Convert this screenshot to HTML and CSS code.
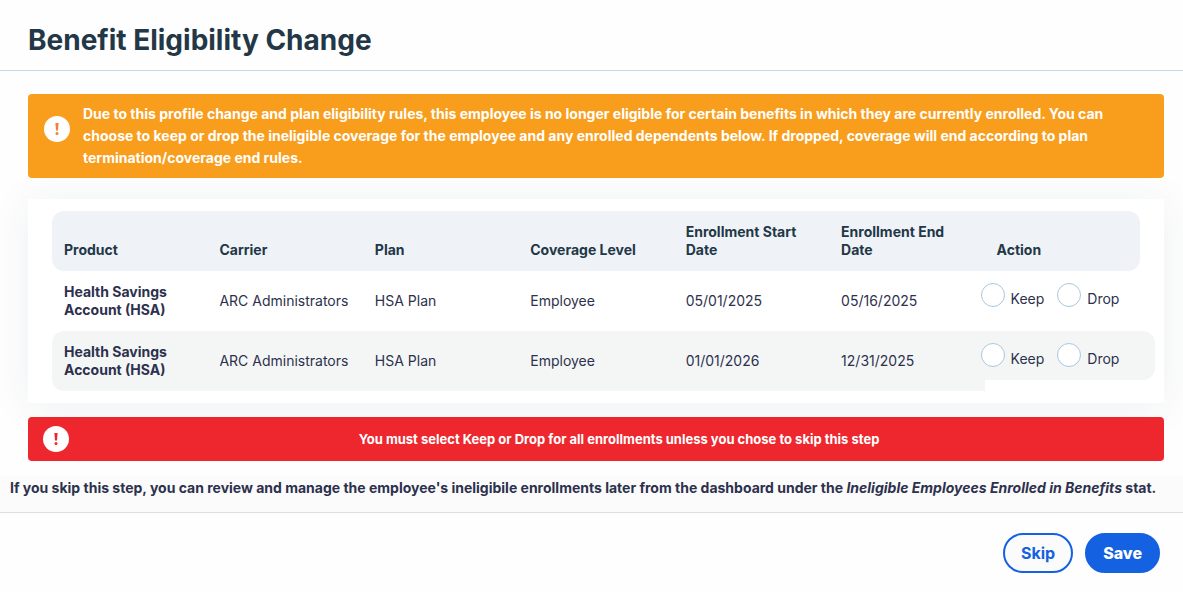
FILE: index.html
```html
<!DOCTYPE html>
<html lang="en">
<head>
    <meta charset="UTF-8">
    <meta content="width=device-width, initial-scale=1.0" name="viewport">
    <title>Benefit Eligibility Change</title>
    <link rel="stylesheet" href="styles.css">
</head>
<body>
<header>
    <h1>Benefit Eligibility Change</h1>
</header>
<form id="eligibility-form">
    <main>
        <div class="alert alert-warning">
            <svg class="alert-icon" viewBox="0 0 26 26" aria-hidden="true">
                <circle cx="13" cy="13" r="13" fill="#fff"/>
                <path d="M11.4 7h3.2l-.6 7.6h-2z" fill="currentColor"/>
                <circle cx="13" cy="17.5" r="1.5" fill="currentColor"/>
            </svg>
            <p>Due to this profile change and plan eligibility rules, this employee is no longer eligible for certain
                benefits in which they are currently enrolled. You can choose to keep or drop the ineligible coverage
                for the employee and any enrolled dependents below. If dropped, coverage will end according to plan
                termination/coverage end rules.</p>
        </div>

        <section class="card">
            <table>
                <thead>
                <tr>
                    <th>Product</th>
                    <th>Carrier</th>
                    <th>Plan</th>
                    <th>Coverage Level</th>
                    <th>Enrollment Start Date</th>
                    <th>Enrollment End Date</th>
                    <th>Action</th>
                </tr>
                </thead>
                <tbody>
                <tr>
                    <td class="product">Health Savings Account (HSA)</td>
                    <td>ARC Administrators</td>
                    <td>HSA Plan</td>
                    <td>Employee</td>
                    <td>05/01/2025</td>
                    <td>05/16/2025</td>
                    <td class="action">
                        <div class="choices">
                            <input type="radio" name="hsa-2025" id="keep-2025" value="keep">
                            <label for="keep-2025">Keep</label>
                            <input type="radio" name="hsa-2025" id="drop-2025" value="drop">
                            <label for="drop-2025">Drop</label>
                        </div>
                    </td>
                </tr>
                <tr>
                    <td class="product">Health Savings Account (HSA)</td>
                    <td>ARC Administrators</td>
                    <td>HSA Plan</td>
                    <td>Employee</td>
                    <td>01/01/2026</td>
                    <td>12/31/2025</td>
                    <td class="action">
                        <div class="choices">
                            <input type="radio" name="hsa-2026" id="keep-2026" value="keep">
                            <label for="keep-2026">Keep</label>
                            <input type="radio" name="hsa-2026" id="drop-2026" value="drop">
                            <label for="drop-2026">Drop</label>
                        </div>
                    </td>
                </tr>
                </tbody>
            </table>
        </section>

        <div class="alert alert-error">
            <svg class="alert-icon" viewBox="0 0 26 26" aria-hidden="true">
                <circle cx="13" cy="13" r="13" fill="#fff"/>
                <path d="M11.4 7h3.2l-.6 7.6h-2z" fill="currentColor"/>
                <circle cx="13" cy="17.5" r="1.5" fill="currentColor"/>
            </svg>
            <p>You must select Keep or Drop for all enrollments unless you chose to skip this step</p>
        </div>
    </main>
    <p class="note">If you skip this step, you can review and manage the employee's ineligibile enrollments later from
        the dashboard under the <em>Ineligible Employees Enrolled in Benefits</em> stat.</p>
    <footer>
        <button type="button" class="btn btn-outline">Skip</button>
        <button type="submit" class="btn btn-primary">Save</button>
    </footer>
</form>
</body>
</html>
```
FILE: styles.css
```css
* {
    box-sizing: border-box;
}

body {
    margin: 0;
    font-family: Inter, "Liberation Sans", sans-serif;
    font-size: 14px;
    line-height: 18px;
    color: #2d314d;
    background-color: #fefefe;
}

header {
    padding: 20px 28px 10px;
    border-bottom: 1px solid #c9d7e3;
}

h1 {
    margin: 0;
    font-size: 28px;
    line-height: 40px;
    font-weight: 700;
    color: #233746;
}

main {
    padding: 23px 19px 15px 28px;
}

.alert {
    position: relative;
    display: flex;
    align-items: center;
    gap: 13px;
    padding: 9px 16px;
    border-radius: 4px;
    color: #fff;
    font-weight: 700;
    line-height: 22px;
}

.alert p {
    flex: 1;
    margin: 0;
}

.alert-icon {
    flex: none;
    width: 26px;
    height: 26px;
}

.alert-warning {
    padding-right: 48px;
    background-color: #f99d1c;
}

.alert-warning .alert-icon {
    color: #f0803c;
    margin-bottom: 14px;
}

.alert-error {
    padding-left: 15px;
    padding-right: 8px;
    background-color: #ee272e;
    font-size: 13px;
    text-align: center;
}

.alert-error .alert-icon {
    color: #ee272e;
}

.card {
    margin: 21px 0 14px;
    padding: 12px 24px;
    background-color: #fff;
    box-shadow: 0 4px 40px rgba(35, 55, 80, 0.07);
}

table {
    width: 100%;
    table-layout: fixed;
    border-collapse: separate;
    border-spacing: 0;
}

th,
td {
    padding: 12px;
    text-align: left;
}

th {
    background-color: #eff3f8;
    color: #233746;
    font-weight: 700;
    vertical-align: bottom;
}

th:first-child {
    border-radius: 12px 0 0 12px;
}

th:last-child {
    border-radius: 0 12px 12px 0;
}

td.product {
    font-weight: 700;
}

tbody tr:nth-child(even) td,
tbody tr:nth-child(even) .choices {
    background-color: #f4f6f6;
}

tbody tr:nth-child(even) td:first-child {
    border-radius: 12px 0 0 12px;
}

tbody tr:nth-child(even) td.action {
    background-color: transparent;
}

td.action {
    padding: 0;
    vertical-align: top;
}

/* the choices run a little wider than their column */
.choices {
    display: flex;
    align-items: flex-start;
    height: 49px;
    margin: 0 -15px 0 -4px;
    padding-top: 12px;
    border-radius: 0 12px 12px 0;
}

.choices input {
    appearance: none;
    flex: none;
    width: 24px;
    height: 24px;
    margin: 0 6px 0 0;
    border: 1px solid #a9c7dc;
    border-radius: 50%;
    background-color: #fff;
}

.choices input:checked {
    border: 7px solid #1461e2;
}

.choices label {
    margin-right: 13px;
    padding-top: 7px;
}

.note {
    margin: 0;
    padding: 3px 10px 15px;
    border-bottom: 1px solid #d9e0e6;
    background-color: #fbfbfb;
    font-weight: 700;
}

footer {
    display: flex;
    justify-content: flex-end;
    gap: 12px;
    padding: 20px 23px;
}

.btn {
    padding: 8px 16px;
    border: 2px solid #1461e2;
    border-radius: 20px;
    font-family: inherit;
    font-size: 16px;
    line-height: 20px;
    cursor: pointer;
}

.btn-outline {
    background-color: #fbfbfb;
    color: #1461e2;
    font-weight: 700;
}

.btn-primary {
    background-color: #1461e2;
    color: #fff;
    font-weight: 800;
}
```
